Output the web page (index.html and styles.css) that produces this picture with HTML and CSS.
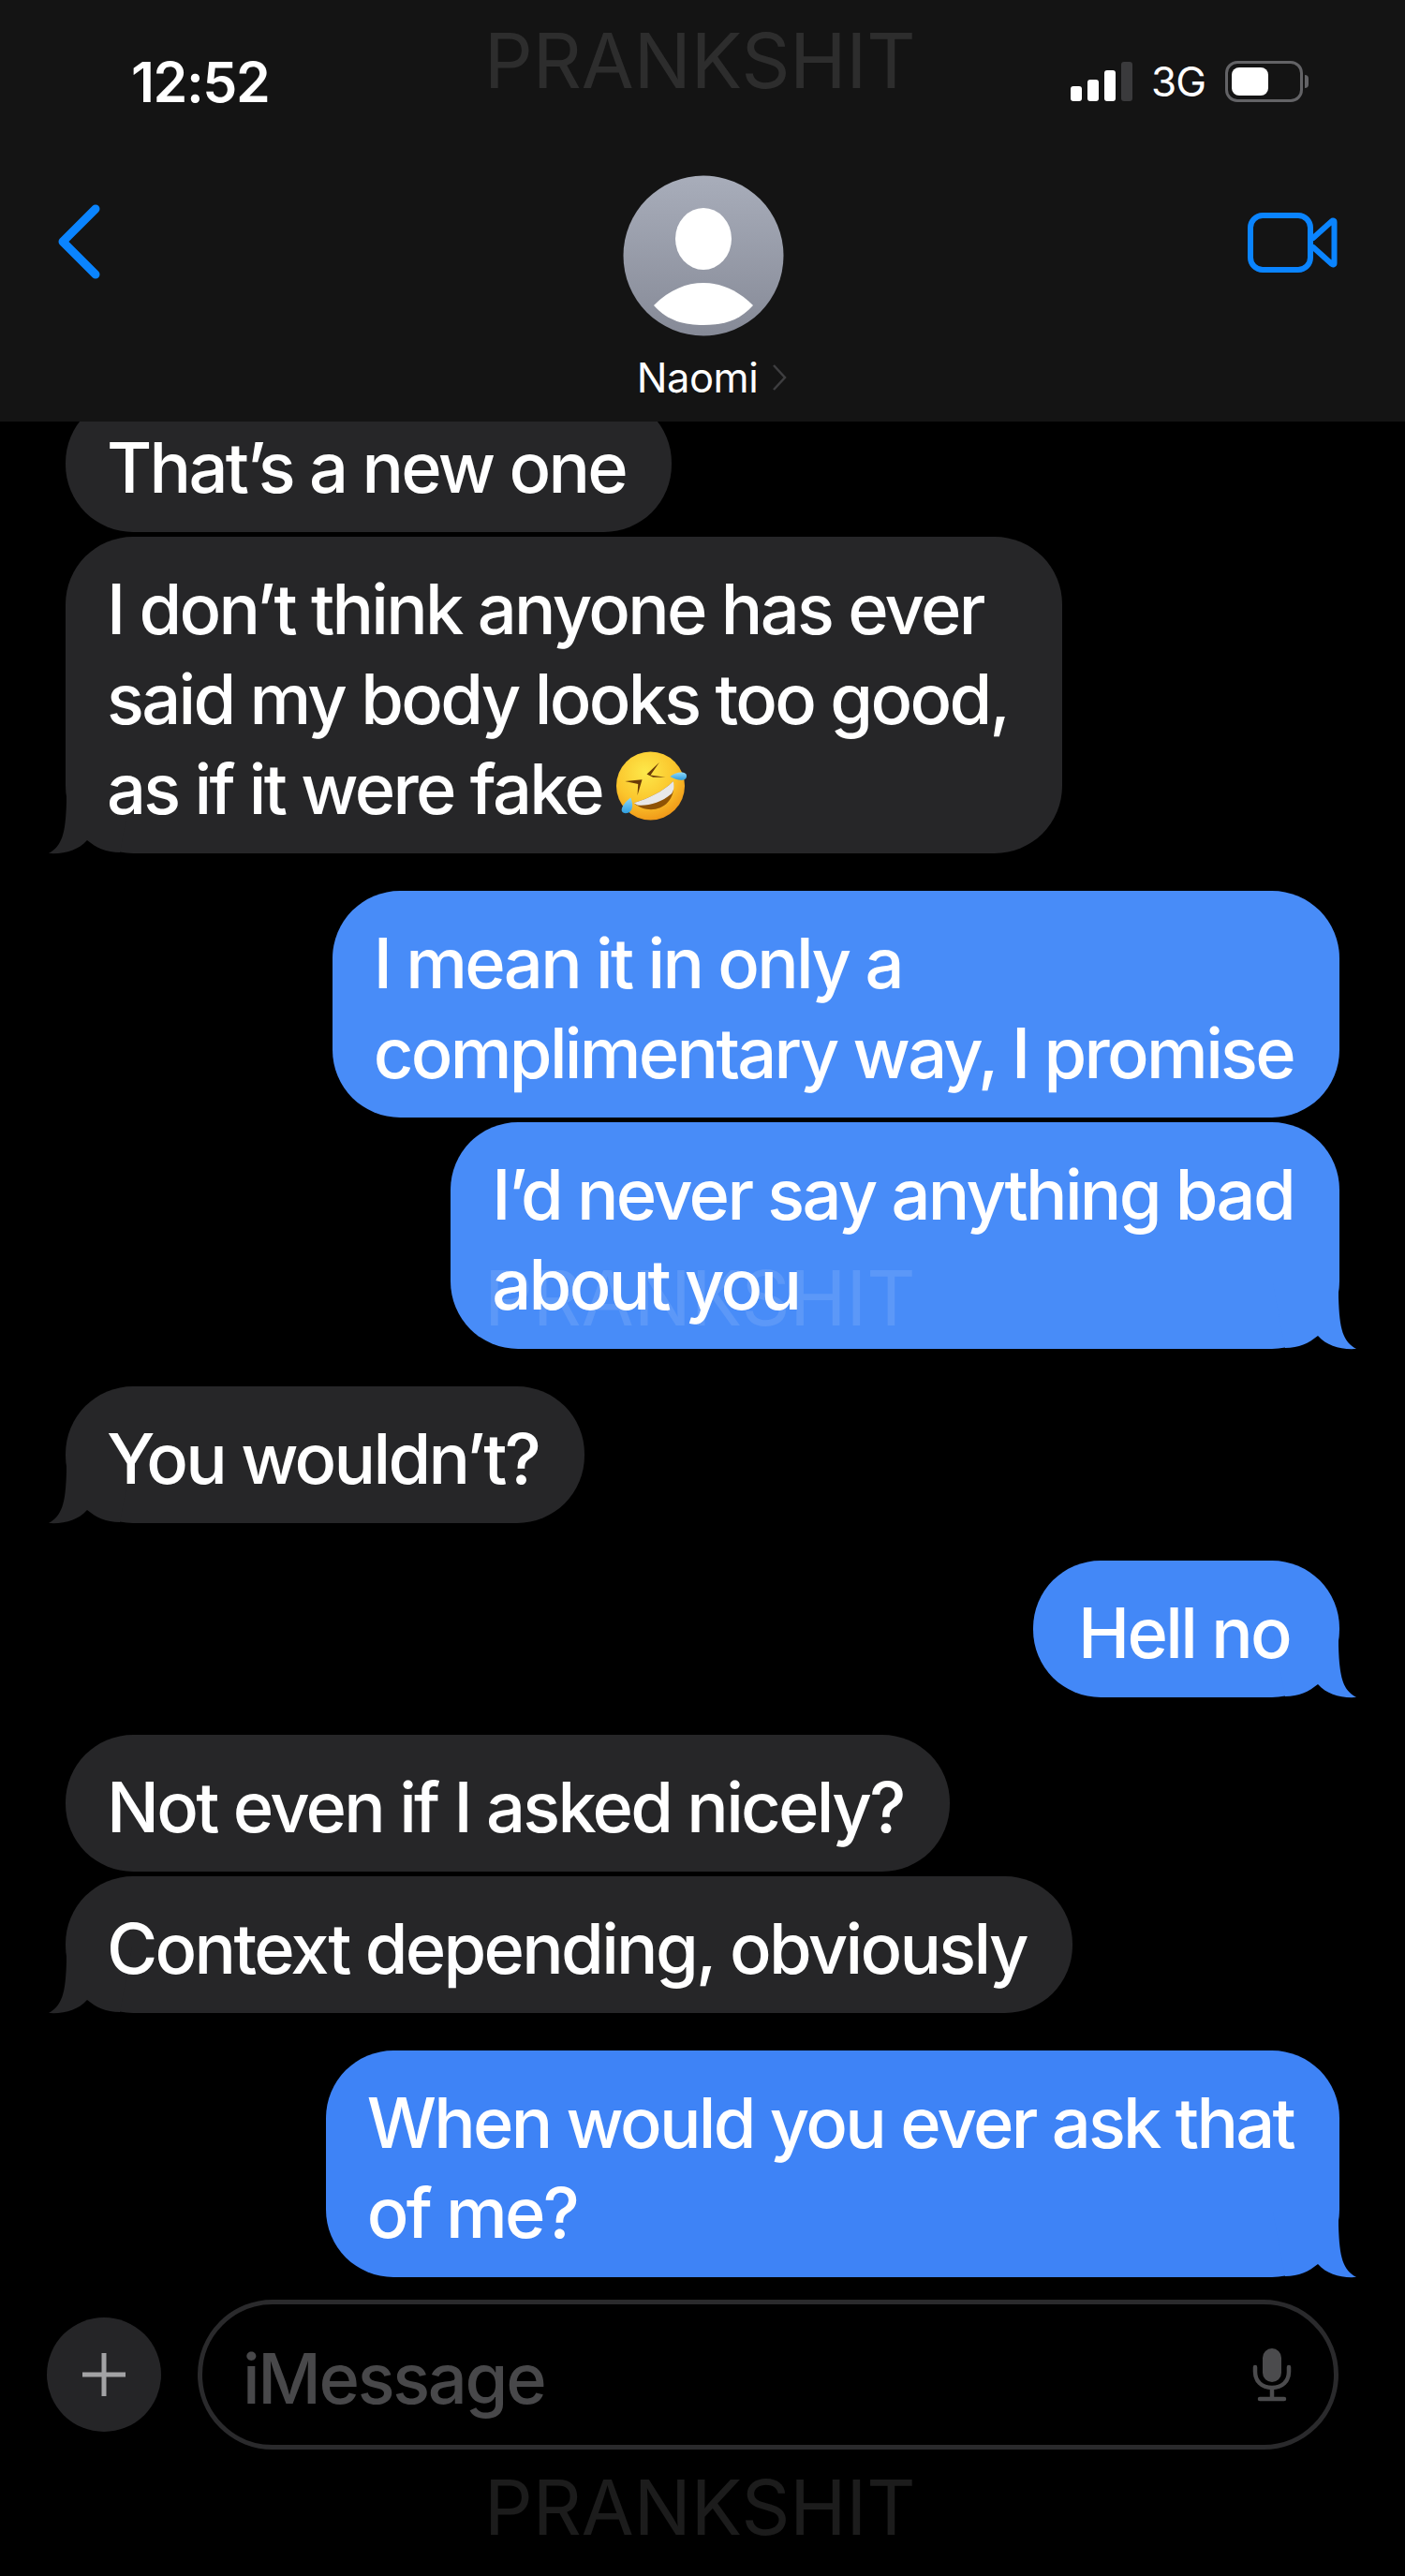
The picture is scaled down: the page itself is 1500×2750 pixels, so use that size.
FILE: index.html
```html
<!DOCTYPE html>
<html lang="en">
<head>
<meta charset="utf-8">
<title>Naomi</title>
<link rel="stylesheet" href="styles.css">
</head>
<body>
<div class="screen">
  <svg class="tail-defs" width="0" height="0" aria-hidden="true">
    <defs>
      <path id="tail" d="M70 0V15C71 50 75 62 89 70C72 71 58 67 48 56C38 64 28 69 13 69L0 0Z"/>
      <linearGradient id="avatar-bg" x1="0" y1="0" x2="0" y2="1">
        <stop offset="0" stop-color="#a8adba"/>
        <stop offset="1" stop-color="#868a97"/>
      </linearGradient>
      <radialGradient id="emoji-face" cx="0.42" cy="0.3" r="0.8">
        <stop offset="0" stop-color="#fde84a"/>
        <stop offset="0.55" stop-color="#fbc52c"/>
        <stop offset="1" stop-color="#ec8a12"/>
      </radialGradient>
      <linearGradient id="emoji-drop" x1="0" y1="0" x2="0" y2="1">
        <stop offset="0" stop-color="#8fd8f8"/>
        <stop offset="1" stop-color="#2f9fe0"/>
      </linearGradient>
    </defs>
  </svg>

  <header class="top">
    <div class="status">
      <span class="time">12:52</span>
      <div class="status-right">
        <div class="signal">
          <i class="bar bar-1"></i><i class="bar bar-2"></i><i class="bar bar-3"></i><i class="bar bar-4"></i>
        </div>
        <span class="network">3G</span>
        <div class="battery"><i class="battery-level"></i></div>
        <i class="battery-nub"></i>
      </div>
    </div>
    <nav class="nav">
      <svg class="back" width="46" height="80" viewBox="0 0 46 80"><path d="M41 5L6 40L41 75" fill="none" stroke="#0a84ff" stroke-width="9" stroke-linecap="round" stroke-linejoin="round"/></svg>
      <div class="contact">
        <svg class="avatar" width="172" height="172" viewBox="0 0 172 172">
          <circle cx="86" cy="86" r="85.5" fill="url(#avatar-bg)"/>
          <ellipse cx="86" cy="68" rx="30" ry="33" fill="#fff"/>
          <path d="M33 139C50 122 68 115 86 115C104 115 122 122 139 139C124 156 106 160 86 160C66 160 48 156 33 139Z" fill="#fff"/>
        </svg>
        <div class="name-row">
          <span class="name">Naomi</span>
          <svg class="name-chevron" width="16" height="30" viewBox="0 0 16 30"><path d="M2 2L14 15L2 28" fill="none" stroke="#3e3e40" stroke-width="2.5"/></svg>
        </div>
      </div>
      <svg class="video" width="96" height="66" viewBox="0 0 96 66">
        <rect x="3" y="3" width="64" height="58" rx="13" fill="none" stroke="#0a84ff" stroke-width="6"/>
        <path d="M70 27L90 9C91 8 92.500 8.500 92.500 10V54C92.500 55.500 91 56 90 55L70 37" fill="none" stroke="#0a84ff" stroke-width="6" stroke-linejoin="round" stroke-linecap="round"/>
      </svg>
    </nav>
  </header>

  <main class="thread">
    <div class="msg in first">That’s a new one</div>
    <div class="msg in near pad-wide">I don’t think anyone has ever<br>said my body looks too good,<br>as if it were fake <svg class="emoji" width="83" height="80" viewBox="50 -30 250 240">
        <circle cx="172" cy="90" r="110" fill="url(#emoji-face)"/>
        <path d="M200 15L172 55L220 62L180 62L160 52Z" fill="#6b3a08"/>
        <path d="M90 75L145 70L130 120L132 84Z" fill="#6b3a08"/>
        <path d="M118 145C165 130 210 110 245 75C258 160 170 190 118 145Z" fill="#8f5304"/>
        <path d="M118 145C165 130 210 110 245 75C250 95 246 105 240 115C205 145 165 155 130 152Z" fill="#e8e8e8"/>
        <path d="M108 128C118 150 116 178 92 178C72 178 74 155 108 128Z" fill="url(#emoji-drop)"/>
        <path d="M235 60C250 45 288 40 288 58C288 76 258 74 235 60Z" fill="url(#emoji-drop)"/>
      </svg><svg class="tail tail-in" width="90" height="71" viewBox="0 0 90 71"><use href="#tail"/></svg></div>
    <div class="msg out shade-a gap">I mean it in only a<br>complimentary way, I promise</div>
    <div class="msg out shade-a near">I’d never say anything bad<br>about you<svg class="tail tail-out" width="90" height="71" viewBox="0 0 90 71"><use href="#tail"/></svg></div>
    <div class="msg in gap">You wouldn’t?<svg class="tail tail-in" width="90" height="71" viewBox="0 0 90 71"><use href="#tail"/></svg></div>
    <div class="msg out shade-b gap pad-short">Hell no<svg class="tail tail-out" width="90" height="71" viewBox="0 0 90 71"><use href="#tail"/></svg></div>
    <div class="msg in gap">Not even if I asked nicely?</div>
    <div class="msg in near">Context depending, obviously<svg class="tail tail-in" width="90" height="71" viewBox="0 0 90 71"><use href="#tail"/></svg></div>
    <div class="msg out shade-c gap">When would you ever ask that<br>of me?<svg class="tail tail-out" width="90" height="71" viewBox="0 0 90 71"><use href="#tail"/></svg></div>
  </main>

  <footer class="composer">
    <div class="plus">
      <svg width="50" height="50" viewBox="0 0 50 50"><path d="M25 2V48M2 25H48" stroke="#a3a3a5" stroke-width="5" fill="none"/></svg>
    </div>
    <div class="field">
      <span class="placeholder">iMessage</span>
      <svg class="mic" width="42" height="58" viewBox="0 0 42 58">
        <rect x="11" y="1" width="20" height="36" rx="10" fill="#4b4b4d"/>
        <path d="M3 21V26C3 36 10 43 21 43C32 43 39 36 39 26V21M21 43V55M8 55H34" fill="none" stroke="#4b4b4d" stroke-width="4.500" stroke-linecap="round"/>
      </svg>
    </div>
  </footer>

  <div class="mark mark-top">PRANKSHIT</div>
  <div class="mark mark-mid">PRANKSHIT</div>
  <div class="mark mark-bottom">PRANKSHIT</div>
</div>
</body>
</html>
```
FILE: styles.css
```css
* { box-sizing: border-box; }
html, body { margin: 0; padding: 0; background: #000; }
body { font-family: Inter, "Liberation Sans", sans-serif; color: #fff; }
.screen { position: relative; width: 1500px; height: 2750px; overflow: hidden; background: #000; }
.tail-defs { position: absolute; }

.top { position: relative; z-index: 2; height: 450px; background: #141414; }
.status { display: flex; justify-content: space-between; align-items: center; height: 172px; padding: 2px 103px 0 140px; }
.time { font-size: 59px; font-weight: 600; letter-spacing: -1.4px; }
.status-right { display: flex; align-items: center; }
.signal { display: flex; align-items: flex-end; gap: 6px; height: 42px; }
.bar { display: block; width: 12px; border-radius: 3px; background: #fff; }
.bar-1 { height: 16px; }
.bar-2 { height: 23px; }
.bar-3 { height: 33px; }
.bar-4 { height: 42px; background: #3a3a3c; }
.network { margin: 0 21px 0 20px; font-size: 44px; letter-spacing: -1px; }
.battery { width: 83px; height: 44px; padding: 4px; border: 3px solid #636366; border-radius: 13px; }
.battery-level { display: block; width: 39px; height: 100%; border-radius: 8px; background: #fff; }
.battery-nub { display: block; width: 4px; height: 14px; margin-left: 2px; border-radius: 0 4px 4px 0; background: #636366; }

.nav { display: flex; justify-content: space-between; align-items: flex-start; padding: 0 72px 0 61px; }
.back { margin-top: 46px; }
.video { margin-top: 55px; }
.contact { display: flex; flex-direction: column; align-items: center; margin: 15px 0 0 63px; }
.avatar { display: block; }
.name-row { display: flex; align-items: center; gap: 15px; margin: 17px 0 0 18px; height: 54px; }
.name { font-size: 43.500px; letter-spacing: -0.5px; }

.thread { display: flex; flex-direction: column; align-items: flex-start; height: 1981px; padding: 0 70px; }
.msg { position: relative; isolation: isolate; padding: 29px 49px 21px 44px; border-radius: 72px; font-size: 74px; font-weight: 450; line-height: 96px; letter-spacing: -2.700px; white-space: nowrap; }
.pad-wide { padding-right: 58px; }
.pad-short { padding-right: 53px; padding-left: 48px; }
.in { background: #262628; fill: #262628; }
.out { align-self: flex-end; }
.shade-a { background: #488cf8; fill: #488cf8; }
.shade-b { background: #4388f7; fill: #4388f7; }
.shade-c { background: #3e83f6; fill: #3e83f6; }
.first { margin-top: -28px; }
.near { margin-top: 5px; }
.gap { margin-top: 40px; }
.tail { position: absolute; z-index: -1; bottom: -1px; display: block; }
.tail-out { right: -19px; }
.tail-in { left: -19px; transform: scaleX(-1); }
.emoji { margin-left: -6px; vertical-align: -10px; }

.composer { display: flex; align-items: center; gap: 39px; padding: 24px 71px 0 50px; }
.plus { display: flex; align-items: center; justify-content: center; width: 122px; height: 122px; border-radius: 50%; background: #252527; }
.field { display: flex; align-items: center; justify-content: space-between; flex: 1; height: 160px; padding: 0 45px 0 43px; border: 5px solid #2a2a2c; border-radius: 80px; }
.placeholder { padding-top: 8px; font-size: 74px; font-weight: 450; letter-spacing: -2.300px; color: #48484a; }

.mark { position: absolute; z-index: 3; left: 517px; font-size: 81px; line-height: 80px; color: rgba(255,255,255,0.11); }
.mark-top { top: 25px; }
.mark-mid { top: 1346px; }
.mark-bottom { top: 2637px; }
```
